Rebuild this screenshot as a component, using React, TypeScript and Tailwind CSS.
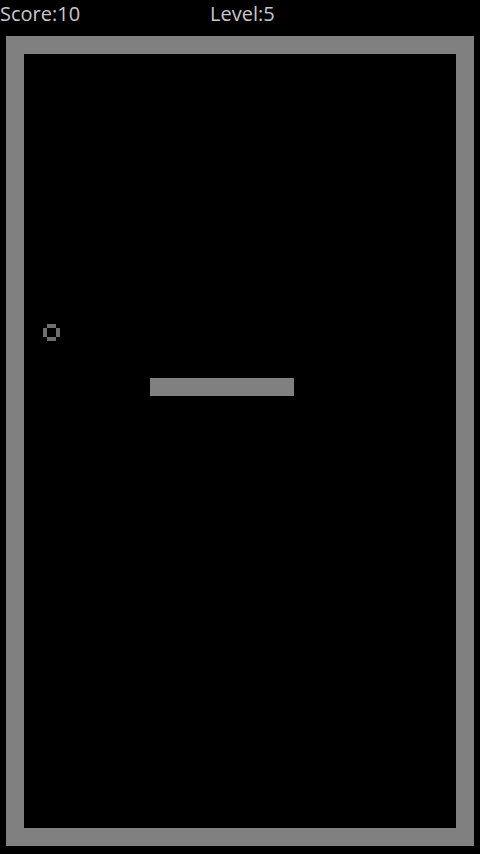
import React from "react";

export default function App() {
  return (
    <div className="w-[480px] h-[854px] bg-black flex flex-col overflow-hidden" style={{ fontFamily: '"Open Sans", "Noto Sans", sans-serif' }}>
      <div className="h-[36px] flex items-start text-[20px] leading-[30px] text-[#c8c8c8]">
        <span className="w-[210px] -mt-[1px]">Score:10</span>
        <span className="-mt-[1px]">Level:5</span>
      </div>
      <div className="mx-[6px] h-[810px] border-[18px] border-[#808080] bg-black relative">
        <div className="absolute left-[18.5px] top-[270px] w-[17px] h-[17px]">
          <svg width="17" height="17" viewBox="0 0 17 17">
            <rect x="4" y="0" width="9" height="4" fill="#6e6e6e" />
            <rect x="4" y="13" width="9" height="4" fill="#6e6e6e" />
            <rect x="0" y="4" width="4" height="9" fill="#6e6e6e" />
            <rect x="13" y="4" width="4" height="9" fill="#6e6e6e" />
          </svg>
        </div>
        <div className="absolute left-[126px] top-[324px] w-[144px] h-[18px] bg-[#808080]" />
      </div>
    </div>
  );
}
